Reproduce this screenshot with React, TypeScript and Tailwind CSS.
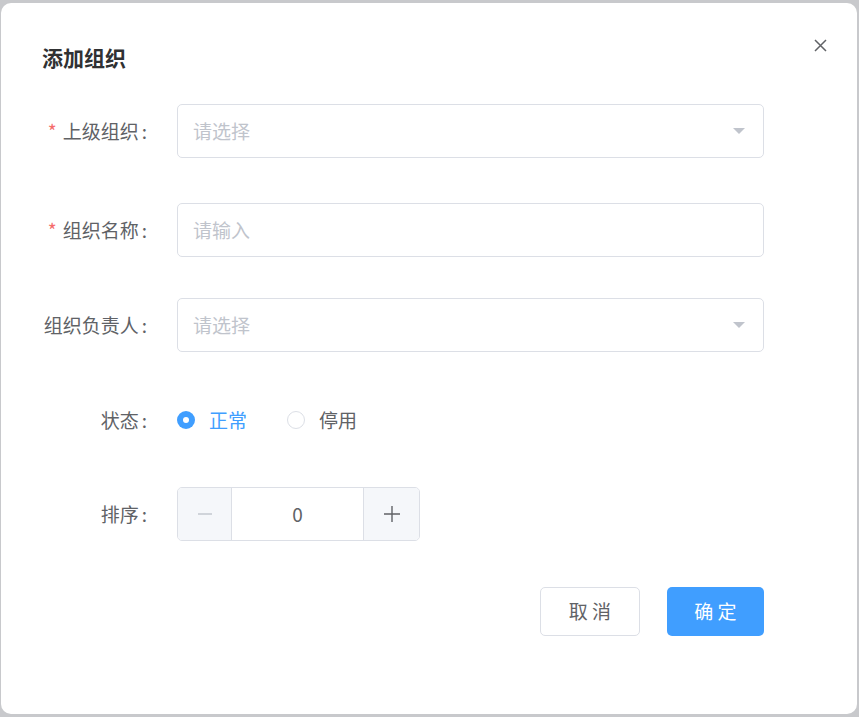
import type { ReactNode } from 'react';

const font = { fontFamily: '"Noto Sans CJK SC", "Noto Sans", sans-serif' };

function Caret() {
  return (
    <svg width="14" height="8" viewBox="0 0 14 8" className="shrink-0">
      <path d="M1 1 L13 1 L7 7 Z" fill="#c0c4cc" />
    </svg>
  );
}

function FormRow({
  label,
  required,
  className,
  children,
}: {
  label: string;
  required?: boolean;
  className?: string;
  children: ReactNode;
}) {
  return (
    <div className={`flex h-[54px] items-center ${className ?? ''}`}>
      <label className="flex w-[136px] shrink-0 items-center justify-end pr-[30px] text-[19px] text-[#606266]">
        {required && <span className="mr-[6px] text-[#f56c6c]">*</span>}
        {label}
        <span className="ml-[3px]">:</span>
      </label>
      {children}
    </div>
  );
}

function SelectBox({ placeholder }: { placeholder: string }) {
  return (
    <div className="flex h-[54px] w-[587px] items-center justify-between rounded-[5px] border border-[#dcdfe6] pl-[15px] pr-[17px]">
      <span className="text-[19px] text-[#c0c4cc]">{placeholder}</span>
      <Caret />
    </div>
  );
}

export default function App() {
  return (
    <div
      className="h-[717px] w-[859px] bg-[#c8c9cc] pb-[3px] pl-[1px] pr-[2px] pt-[3px]"
      style={font}
    >
      <div className="relative h-full rounded-[10px] bg-white pl-[40px] pt-[40px]">
        <button className="absolute right-[29px] top-[34px] flex h-[16px] w-[16px] items-center justify-center">
          <svg width="13" height="13" viewBox="0 0 13 13">
            <path d="M1 1 L12 12 M12 1 L1 12" stroke="#606266" strokeWidth="1.5" />
          </svg>
        </button>

        <h2 className="ml-[1px] h-[28px] text-[21px] font-bold leading-[28px] text-[#303133]">添加组织</h2>

        <FormRow label="上级组织" required className="mt-[33px]">
          <SelectBox placeholder="请选择" />
        </FormRow>

        <FormRow label="组织名称" required className="mt-[45px]">
          <div className="flex h-[54px] w-[587px] items-center rounded-[5px] border border-[#dcdfe6] pl-[15px]">
            <span className="text-[19px] text-[#c0c4cc]">请输入</span>
          </div>
        </FormRow>

        <FormRow label="组织负责人" className="mt-[41px]">
          <SelectBox placeholder="请选择" />
        </FormRow>

        <FormRow label="状态" className="mt-[41px]">
          <div className="flex items-center text-[19px]">
            <span className="flex h-[18px] w-[18px] items-center justify-center rounded-full bg-[#409eff]">
              <span className="h-[6px] w-[6px] rounded-full bg-white" />
            </span>
            <span className="ml-[14px] text-[#409eff]">正常</span>
            <span className="ml-[40px] h-[18px] w-[18px] rounded-full border border-[#dcdfe6] bg-white" />
            <span className="ml-[14px] text-[#606266]">停用</span>
          </div>
        </FormRow>

        <FormRow label="排序" className="mt-[40px]">
          <div className="flex h-[54px] w-[243px] overflow-hidden rounded-[5px] border border-[#dcdfe6] text-[19px]">
            <div className="flex w-[54px] items-center justify-center border-r border-[#dcdfe6] bg-[#f5f7fa]">
              <svg width="16" height="16" viewBox="0 0 16 16">
                <path d="M1 8 H15" stroke="#c0c4cc" strokeWidth="1.4" />
              </svg>
            </div>
            <div className="flex flex-1 items-center justify-center text-[#606266]">0</div>
            <div className="flex w-[56px] items-center justify-center border-l border-[#dcdfe6] bg-[#f5f7fa]">
              <svg width="18" height="18" viewBox="0 0 18 18">
                <path d="M1 9 H17 M9 1 V17" stroke="#606266" strokeWidth="1.4" />
              </svg>
            </div>
          </div>
        </FormRow>

        <div className="mt-[46px] flex justify-end gap-[27px] pr-[93px]">
          <button className="h-[49px] w-[100px] rounded-[5px] border border-[#dcdfe6] bg-white text-[19px] text-[#606266]">
            取 消
          </button>
          <button className="h-[49px] w-[97px] rounded-[5px] bg-[#409eff] text-[19px] text-white">
            确 定
          </button>
        </div>
      </div>
    </div>
  );
}
